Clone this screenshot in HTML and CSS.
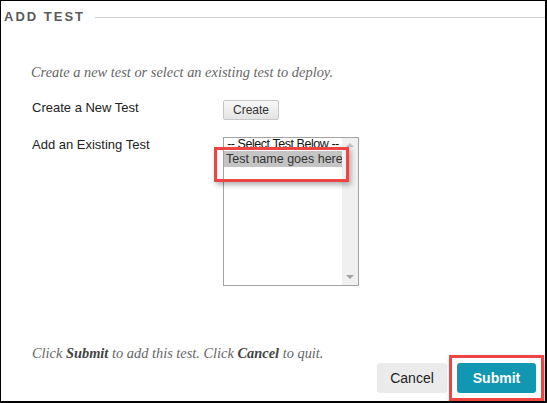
FILE: index.html
```html
<!DOCTYPE html>
<html>
<head>
<meta charset="utf-8">
<link rel="stylesheet" href="styles.css">
</head>
<body>
<div class="frame">
  <div class="header">
    <h1 class="title">ADD TEST</h1>
    <div class="rule"></div>
  </div>
  <p class="intro">Create a new test or select an existing test to deploy.</p>
  <div class="form">
    <div class="label">Create a New Test</div>
    <div class="control"><button class="btn-create">Create</button></div>
    <div class="label">Add an Existing Test</div>
    <div class="control">
      <div class="listbox">
        <div class="options">
          <div class="option first">-- Select Test Below --</div>
          <div class="option selected">Test name goes here</div>
        </div>
        <div class="scrollbar">
          <span class="arrow up"></span>
          <span class="arrow down"></span>
        </div>
        <div class="callout callout-list"></div>
      </div>
    </div>
  </div>
  <div class="spacer"></div>
  <p class="hint">Click <b>Submit</b> to add this test. Click <b>Cancel</b> to quit.</p>
  <div class="actions">
    <button class="btn-cancel">Cancel</button>
    <div class="submit-wrap">
      <button class="btn-submit">Submit</button>
      <div class="callout callout-submit"></div>
    </div>
  </div>
</div>
</body>
</html>
```
FILE: styles.css
```css
html, body {
  margin: 0;
  padding: 0;
  background: #fff;
}
.frame {
  width: 547px;
  height: 403px;
  box-sizing: border-box;
  border: 1px solid #000;
  border-right-width: 2px;
  border-bottom-width: 2px;
  display: flex;
  flex-direction: column;
  font-family: "Liberation Sans", Arial, sans-serif;
  overflow: hidden;
}
.header {
  display: flex;
  align-items: center;
  padding: 8px 0 0 3px;
  height: 16px;
}
.title {
  margin: 0;
  font-size: 13px;
  font-weight: bold;
  letter-spacing: 2px;
  color: #5a5a5a;
  line-height: 16px;
}
.rule {
  flex: 1;
  height: 1px;
  background: #cfcfcf;
  margin-left: 10px;
}
.intro {
  margin: 38px 0 0 30px;
  font-family: "Liberation Serif", "Times New Roman", serif;
  font-style: italic;
  font-size: 14.4px;
  line-height: 18px;
  color: #666;
}
.form {
  display: grid;
  grid-template-columns: 191px auto;
  row-gap: 17px;
  margin: 19px 0 0 31px;
  align-items: start;
}
.label {
  font-size: 13px;
  line-height: 16px;
  color: #222;
}
.btn-create {
  display: block;
  width: 56px;
  height: 20px;
  padding: 0;
  font-family: "Liberation Sans", Arial, sans-serif;
  font-size: 12px;
  color: #333;
  background: linear-gradient(#f7f7f7, #e4e4e4);
  border: 1px solid #c6c6c6;
  border-radius: 2px;
}
.listbox {
  position: relative;
  width: 136px;
  height: 149px;
  box-sizing: border-box;
  border: 1px solid #a3a3a3;
  display: flex;
  background: #fff;
}
.options {
  flex: 1;
  overflow: hidden;
}
.option {
  font-size: 12.5px;
  line-height: 16px;
  height: 16px;
  padding-left: 2px;
  color: #111;
  white-space: nowrap;
}
.option.first {
  height: 13px;
  line-height: 13px;
  text-align: center;
  padding-left: 0;
  letter-spacing: -0.45px;
}
.option.selected {
  background: #c4c4c4;
  color: #333;
}
.scrollbar {
  width: 16px;
  background: #f0f0f0;
  display: flex;
  flex-direction: column;
  justify-content: space-between;
  align-items: center;
  padding: 5px 0 6px;
  box-sizing: border-box;
}
.arrow {
  width: 0;
  height: 0;
  border-left: 4px solid transparent;
  border-right: 4px solid transparent;
}
.arrow.up {
  border-bottom: 4px solid #c2c2c2;
}
.arrow.down {
  border-top: 4px solid #a3a3a3;
}
.callout {
  position: absolute;
  box-sizing: border-box;
  border: 3px solid #ee4444;
  box-shadow: 2px 3px 5px rgba(0, 0, 0, 0.3);
  pointer-events: none;
}
.callout-list {
  left: -10px;
  top: 9px;
  width: 135px;
  height: 35px;
}
.spacer {
  flex: 1;
}
.hint {
  margin: 0 0 1px 31px;
  font-family: "Liberation Serif", "Times New Roman", serif;
  font-style: italic;
  font-size: 14.4px;
  line-height: 18px;
  color: #666;
}
.hint b {
  color: #444;
}
.actions {
  display: flex;
  justify-content: flex-end;
  gap: 10px;
  padding: 0 9px 8px 0;
}
.btn-cancel {
  width: 70px;
  height: 30px;
  padding: 0;
  border: none;
  border-radius: 2px;
  background: #ebebeb;
  font-family: "Liberation Sans", Arial, sans-serif;
  font-size: 14px;
  color: #222;
}
.submit-wrap {
  position: relative;
}
.btn-submit {
  display: block;
  width: 79px;
  height: 30px;
  padding: 0;
  border: none;
  border-radius: 3px;
  background: #1197b1;
  font-family: "Liberation Sans", Arial, sans-serif;
  font-size: 14px;
  font-weight: bold;
  color: #fff;
}
.callout-submit {
  left: -8px;
  top: -8px;
  width: 95px;
  height: 46px;
}
```
